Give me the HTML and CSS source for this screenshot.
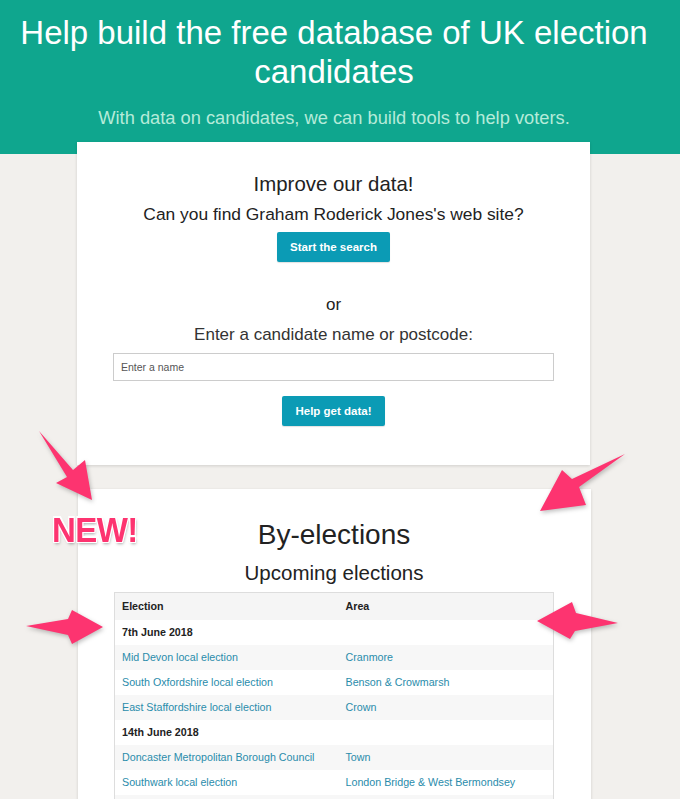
FILE: index.html
```html
<!DOCTYPE html>
<html lang="en">
<head>
<meta charset="utf-8">
<title>Help build the free database of UK election candidates</title>
<link rel="stylesheet" href="styles.css">
</head>
<body>
<header class="hero">
  <div class="hero-inner">
    <h1 class="hero-title">Help build the free database of UK election candidates</h1>
    <p class="hero-sub">With data on candidates, we can build tools to help voters.</p>
  </div>
</header>
<main class="main">
  <section class="card card-improve">
    <h2 class="card-title">Improve our data!</h2>
    <p class="lead">Can you find Graham Roderick Jones's web site?</p>
    <a class="btn" href="#">Start the search</a>
    <p class="or">or</p>
    <p class="lead lead-muted">Enter a candidate name or postcode:</p>
    <input class="text-input" type="text" placeholder="Enter a name">
    <a class="btn" href="#">Help get data!</a>
  </section>
  <section class="card card-by">
    <h2 class="big-title">By-elections</h2>
    <h3 class="sub-title">Upcoming elections</h3>
    <table class="elections">
      <thead>
        <tr><th class="col-election">Election</th><th>Area</th></tr>
      </thead>
      <tbody>
        <tr class="date-row"><td colspan="2">7th June 2018</td></tr>
        <tr class="odd"><td><a href="#">Mid Devon local election</a></td><td><a href="#">Cranmore</a></td></tr>
        <tr><td><a href="#">South Oxfordshire local election</a></td><td><a href="#">Benson &amp; Crowmarsh</a></td></tr>
        <tr class="odd"><td><a href="#">East Staffordshire local election</a></td><td><a href="#">Crown</a></td></tr>
        <tr class="date-row"><td colspan="2">14th June 2018</td></tr>
        <tr class="odd"><td><a href="#">Doncaster Metropolitan Borough Council</a></td><td><a href="#">Town</a></td></tr>
        <tr><td><a href="#">Southwark local election</a></td><td><a href="#">London Bridge &amp; West Bermondsey</a></td></tr>
        <tr class="odd"><td></td><td></td></tr>
      </tbody>
    </table>
  </section>
</main>

<div class="annot-new">NEW!</div>
<svg class="annot-arrows" width="680" height="799" viewBox="0 0 680 799" aria-hidden="true">
  <g fill="#fd3470">
    <polygon points="39,431 73,470 85,460 92,500 56,483 67,477"/>
    <polygon points="625,454 579,487 586,505 540,511 562,470 572,479"/>
    <polygon points="26,626 68,619 72,610 103,627 72,644 68,635"/>
    <polygon points="618,623 576,613 572,602 537,621 570,639 575,631"/>
  </g>
</svg>
</body>
</html>
```

FILE: styles.css
```css
* { box-sizing: border-box; }

html, body {
  margin: 0;
  padding: 0;
}

body {
  position: relative;
  background: #f2f0ed;
  font-family: "Liberation Sans", Arial, Helvetica, sans-serif;
  color: #222;
  height: 799px;
  overflow: hidden;
}

.hero {
  background: #0fa68e;
  height: 154px;
}

.hero-inner {
  width: 668px;
  padding-top: 13px;
  text-align: center;
}

.hero-title {
  margin: 0;
  font-size: 33px;
  line-height: 39px;
  font-weight: normal;
  color: #ffffff;
}

.hero-sub {
  margin: 16px 0 0;
  font-size: 18.3px;
  line-height: 22px;
  color: #b5ebd9;
}

.main {
  width: 668px;
  margin-top: -12px;
  display: flex;
  flex-direction: column;
  align-items: center;
  gap: 24px;
}

.card {
  width: 513px;
  background: #ffffff;
  box-shadow: 0 1px 3px rgba(0, 0, 0, 0.14);
  display: flex;
  flex-direction: column;
  align-items: center;
  text-align: center;
  padding: 0 36px;
}

.card-improve {
  padding-top: 30px;
  padding-bottom: 39px;
  margin-right: 1px;
}

.card-title {
  margin: 0;
  font-size: 20.4px;
  line-height: 24px;
  font-weight: normal;
  color: #222;
}

.lead {
  margin: 8px 0 0;
  font-size: 17.4px;
  line-height: 20px;
  color: #222;
}

.lead-muted {
  margin-top: 10px;
  font-size: 17px;
  color: #333;
}

.btn {
  display: inline-block;
  margin-top: 8px;
  padding: 0 13px;
  height: 30px;
  line-height: 30px;
  background: #0b9bb5;
  color: #ffffff;
  font-size: 11.5px;
  font-weight: bold;
  text-decoration: none;
  border-radius: 2px;
  box-shadow: 0 1px 1px rgba(0, 0, 0, 0.12);
}

.or {
  margin: 33px 0 0;
  font-size: 17px;
  line-height: 20px;
  color: #222;
}

.text-input {
  margin-top: 8px;
  width: 441px;
  height: 28px;
  border: 1px solid #cccccc;
  padding: 0 7px;
  font-family: "Liberation Sans", Arial, sans-serif;
  font-size: 10.5px;
  color: #555;
  background: #fff;
  outline: none;
  border-radius: 0;
}

.text-input::placeholder {
  color: #555;
}

.card-improve .text-input + .btn {
  margin-top: 15px;
}

.card-by {
  padding-top: 30px;
  padding-bottom: 20px;
}

.big-title {
  margin: 0;
  font-size: 28px;
  line-height: 32px;
  font-weight: normal;
  color: #222;
}

.sub-title {
  margin: 10px 0 0;
  font-size: 20.5px;
  line-height: 24px;
  font-weight: normal;
  color: #222;
}

.elections {
  margin-top: 7px;
  width: 440px;
  border-collapse: collapse;
  border: 1px solid #dddddd;
  font-size: 10.7px;
  text-align: left;
}

.elections th {
  background: #f5f5f5;
  height: 27px;
  padding: 0 7px;
  font-weight: bold;
  color: #222;
}

.elections th.col-election {
  width: 224px;
}

.elections td {
  height: 25px;
  padding: 0 7px;
  white-space: nowrap;
}

.elections tr.odd td {
  background: #f7f7f7;
}

.elections tr.date-row td {
  font-weight: bold;
  color: #222;
}

.elections a {
  color: #2a8cab;
  text-decoration: none;
}

.annot-new {
  position: absolute;
  left: 52px;
  top: 511px;
  font-size: 33px;
  line-height: 38px;
  font-weight: bold;
  color: #fd3470;
  letter-spacing: -0.6px;
  transform: scaleY(1.05);
  text-shadow:
    1px 0 0 #fff, -1px 0 0 #fff, 0 1px 0 #fff, 0 -1px 0 #fff,
    1px 1px 0 #fff, -1px -1px 0 #fff, 1px -1px 0 #fff, -1px 1px 0 #fff,
    1px 2px 3px rgba(0, 0, 0, 0.35);
}

.annot-arrows {
  position: absolute;
  left: 0;
  top: 0;
  pointer-events: none;
  filter: drop-shadow(1px 2px 2px rgba(0, 0, 0, 0.25));
}
```
